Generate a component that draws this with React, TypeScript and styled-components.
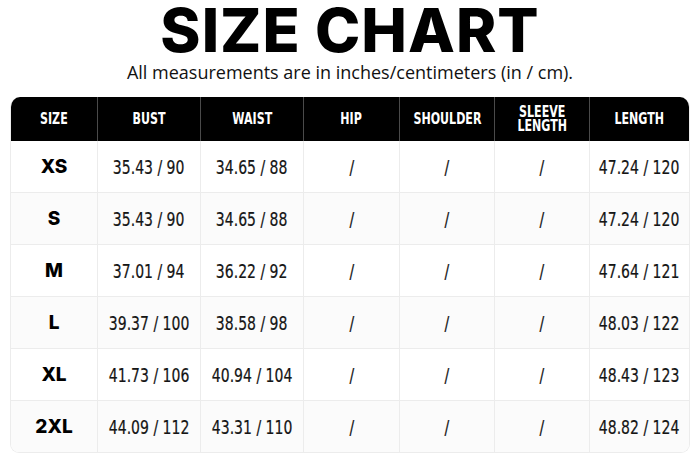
import styled, { createGlobalStyle } from "styled-components";

const GlobalStyle = createGlobalStyle`
  html, body {
    margin: 0;
    padding: 0;
    background: #ffffff;
  }
  body {
    width: 700px;
    height: 467px;
    overflow: hidden;
  }
`;

type Row = {
  size: string;
  bust: string;
  waist: string;
  hip: string;
  shoulder: string;
  sleeve: string;
  length: string;
};

const rows: Row[] = [
  { size: "XS", bust: "35.43 / 90", waist: "34.65 / 88", hip: "/", shoulder: "/", sleeve: "/", length: "47.24 / 120" },
  { size: "S", bust: "35.43 / 90", waist: "34.65 / 88", hip: "/", shoulder: "/", sleeve: "/", length: "47.24 / 120" },
  { size: "M", bust: "37.01 / 94", waist: "36.22 / 92", hip: "/", shoulder: "/", sleeve: "/", length: "47.64 / 121" },
  { size: "L", bust: "39.37 / 100", waist: "38.58 / 98", hip: "/", shoulder: "/", sleeve: "/", length: "48.03 / 122" },
  { size: "XL", bust: "41.73 / 106", waist: "40.94 / 104", hip: "/", shoulder: "/", sleeve: "/", length: "48.43 / 123" },
  { size: "2XL", bust: "44.09 / 112", waist: "43.31 / 110", hip: "/", shoulder: "/", sleeve: "/", length: "48.82 / 124" },
];

const headers = ["SIZE", "BUST", "WAIST", "HIP", "SHOULDER", "SLEEVE\nLENGTH", "LENGTH"];

const App = () => {
  return (
    <>
      <GlobalStyle />
      <Page>
        <Title>SIZE CHART</Title>
        <Subtitle>All measurements are in inches/centimeters (in / cm).</Subtitle>
        <Table>
          <HeaderRow>
            {headers.map((h) => (
              <HeadCell key={h}>
                <Narrow>{h}</Narrow>
              </HeadCell>
            ))}
          </HeaderRow>
          {rows.map((r, i) => (
            <BodyRow key={r.size} $shaded={i % 2 === 1} $last={i === rows.length - 1}>
              <SizeCell>{r.size}</SizeCell>
              {[r.bust, r.waist, r.hip, r.shoulder, r.sleeve, r.length].map((v, j) => (
                <Cell key={j}>
                  <Narrow>{v}</Narrow>
                </Cell>
              ))}
            </BodyRow>
          ))}
        </Table>
      </Page>
    </>
  );
};

export default App;

const columns = "86px 103px 103px 96px 95px 95px 100px";

const Page = styled.div`
  display: flex;
  flex-direction: column;
  align-items: center;
`;

const Title = styled.h1`
  margin: 0;
  font-family: "Inter", "DejaVu Sans", sans-serif;
  font-weight: 800;
  font-size: 61px;
  line-height: 60px;
  letter-spacing: 1px;
  color: #000;
`;

const Subtitle = styled.p`
  margin: 1px 0 0;
  font-family: "Open Sans", "Noto Sans", sans-serif;
  font-size: 18px;
  line-height: 22px;
  color: #111;
`;

const Table = styled.div`
  margin-top: 14px;
  width: 678px;
  border: 1px solid #ececec;
  border-top: none;
  border-radius: 10px 10px 9px 9px;
  overflow: hidden;
`;

const HeaderRow = styled.div`
  display: grid;
  grid-template-columns: ${columns};
  height: 44px;
  background: #000;
`;

const Narrow = styled.span`
  display: inline-block;
  transform: scaleX(0.82);
  white-space: pre-line;
`;

const HeadCell = styled.div`
  display: flex;
  align-items: center;
  justify-content: center;
  text-align: center;
  font-family: "DejaVu Sans Condensed", "DejaVu Sans", sans-serif;
  font-weight: 700;
  font-size: 15px;
  line-height: 14px;
  color: #fff;
  border-left: 1px solid #4a4a4a;
  &:first-child {
    border-left: none;
  }
`;

const BodyRow = styled.div<{ $shaded: boolean; $last: boolean }>`
  box-sizing: border-box;
  display: grid;
  grid-template-columns: ${columns};
  height: ${({ $last }) => ($last ? "51px" : "52px")};
  background: ${({ $shaded }) => ($shaded ? "#fbfbfb" : "#fff")};
  border-bottom: ${({ $last }) => ($last ? "none" : "1px solid #ececec")};
`;

const Cell = styled.div`
  display: flex;
  align-items: center;
  justify-content: center;
  font-family: "DejaVu Sans Condensed", "DejaVu Sans", sans-serif;
  font-size: 19px;
  color: #151515;
  -webkit-text-stroke: 0.2px #151515;
  border-left: 1px solid #ececec;
`;

const SizeCell = styled.div`
  display: flex;
  align-items: center;
  justify-content: center;
  font-family: "Inter", "DejaVu Sans", sans-serif;
  font-weight: 800;
  font-size: 19px;
  color: #000;
`;
